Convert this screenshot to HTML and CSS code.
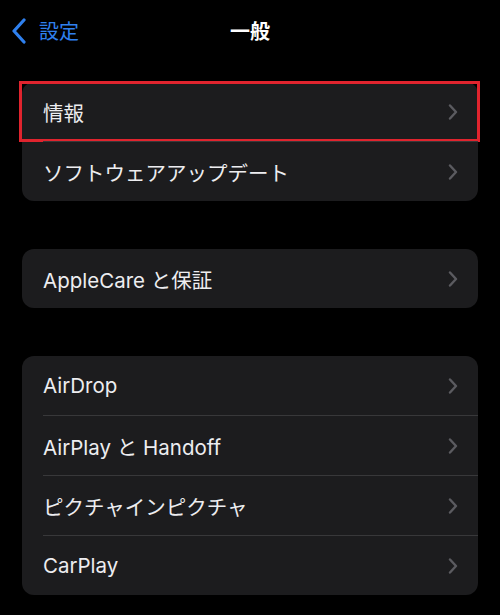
FILE: index.html
```html
<!DOCTYPE html>
<html lang="ja">
<head>
  <meta charset="UTF-8" />
  <meta name="viewport" content="width=device-width, initial-scale=1.0" />
  <title>一般</title>
  <link rel="stylesheet" href="styles.css">
</head>
<body>
  <header class="nav">
    <a href="#" class="back">
      <svg class="back-icon" width="16" height="26" viewBox="0 0 16 26">
        <path d="M13 2 L3 13 L13 24" fill="none" stroke="currentColor" stroke-width="3.2" stroke-linecap="round" stroke-linejoin="round"/>
      </svg>
      <span>設定</span>
    </a>
    <h1 class="title">一般</h1>
  </header>

  <ul class="group first">
    <li class="row highlighted"><span>情報</span><svg class="chev" width="10" height="16" viewBox="0 0 10 16"><path d="M2 1.5 L8 8 L2 14.5" /></svg></li>
    <li class="row"><span>ソフトウェアアップデート</span><svg class="chev" width="10" height="16" viewBox="0 0 10 16"><path d="M2 1.5 L8 8 L2 14.5" /></svg></li>
  </ul>

  <ul class="group">
    <li class="row"><span>AppleCare と保証</span><svg class="chev" width="10" height="16" viewBox="0 0 10 16"><path d="M2 1.5 L8 8 L2 14.5" /></svg></li>
  </ul>

  <ul class="group">
    <li class="row"><span>AirDrop</span><svg class="chev" width="10" height="16" viewBox="0 0 10 16"><path d="M2 1.5 L8 8 L2 14.5" /></svg></li>
    <li class="row"><span>AirPlay と Handoff</span><svg class="chev" width="10" height="16" viewBox="0 0 10 16"><path d="M2 1.5 L8 8 L2 14.5" /></svg></li>
    <li class="row"><span>ピクチャインピクチャ</span><svg class="chev" width="10" height="16" viewBox="0 0 10 16"><path d="M2 1.5 L8 8 L2 14.5" /></svg></li>
    <li class="row"><span>CarPlay</span><svg class="chev" width="10" height="16" viewBox="0 0 10 16"><path d="M2 1.5 L8 8 L2 14.5" /></svg></li>
  </ul>
</body>
</html>
```

FILE: styles.css
```css
body {
  font-family: Inter, 'Noto Sans CJK JP', sans-serif;
  background-color: #000;
  color: #ededf0;
  margin: 0;
  padding: 0;
}
.nav {
  position: relative;
  height: 60px;
  display: flex;
  align-items: center;
  justify-content: center;
}
.back {
  position: absolute;
  left: 11px;
  top: 16px;
  display: flex;
  align-items: center;
  gap: 12px;
  color: #2f80ee;
  text-decoration: none;
  font-size: 20px;
}
.back-icon {
  display: block;
}
.title {
  margin: 0;
  font-size: 20px;
  font-weight: 700;
  color: #fff;
}
.group {
  list-style: none;
  margin: 48px 22px 0 22px;
  padding: 0;
  background-color: #1c1c1e;
  border-radius: 12px;
}
.group.first {
  margin-top: 22px;
}
.row {
  position: relative;
  height: 59px;
  display: flex;
  align-items: center;
  justify-content: space-between;
  padding: 0 20px 0 21px;
  font-size: 20.5px;
}
.row + .row::before {
  content: "";
  position: absolute;
  top: -1px;
  left: 21px;
  right: 0;
  height: 1px;
  background-color: #38383a;
}
.row + .row {
  margin-top: 1px;
}
.chev {
  display: block;
  fill: none;
  stroke: #5b5b60;
  stroke-width: 2.4;
  stroke-linecap: round;
  stroke-linejoin: round;
}
.highlighted::after {
  content: "";
  position: absolute;
  top: -1px;
  bottom: -1px;
  left: -3px;
  right: -2px;
  border: 3px solid #e0242e;
}
```
